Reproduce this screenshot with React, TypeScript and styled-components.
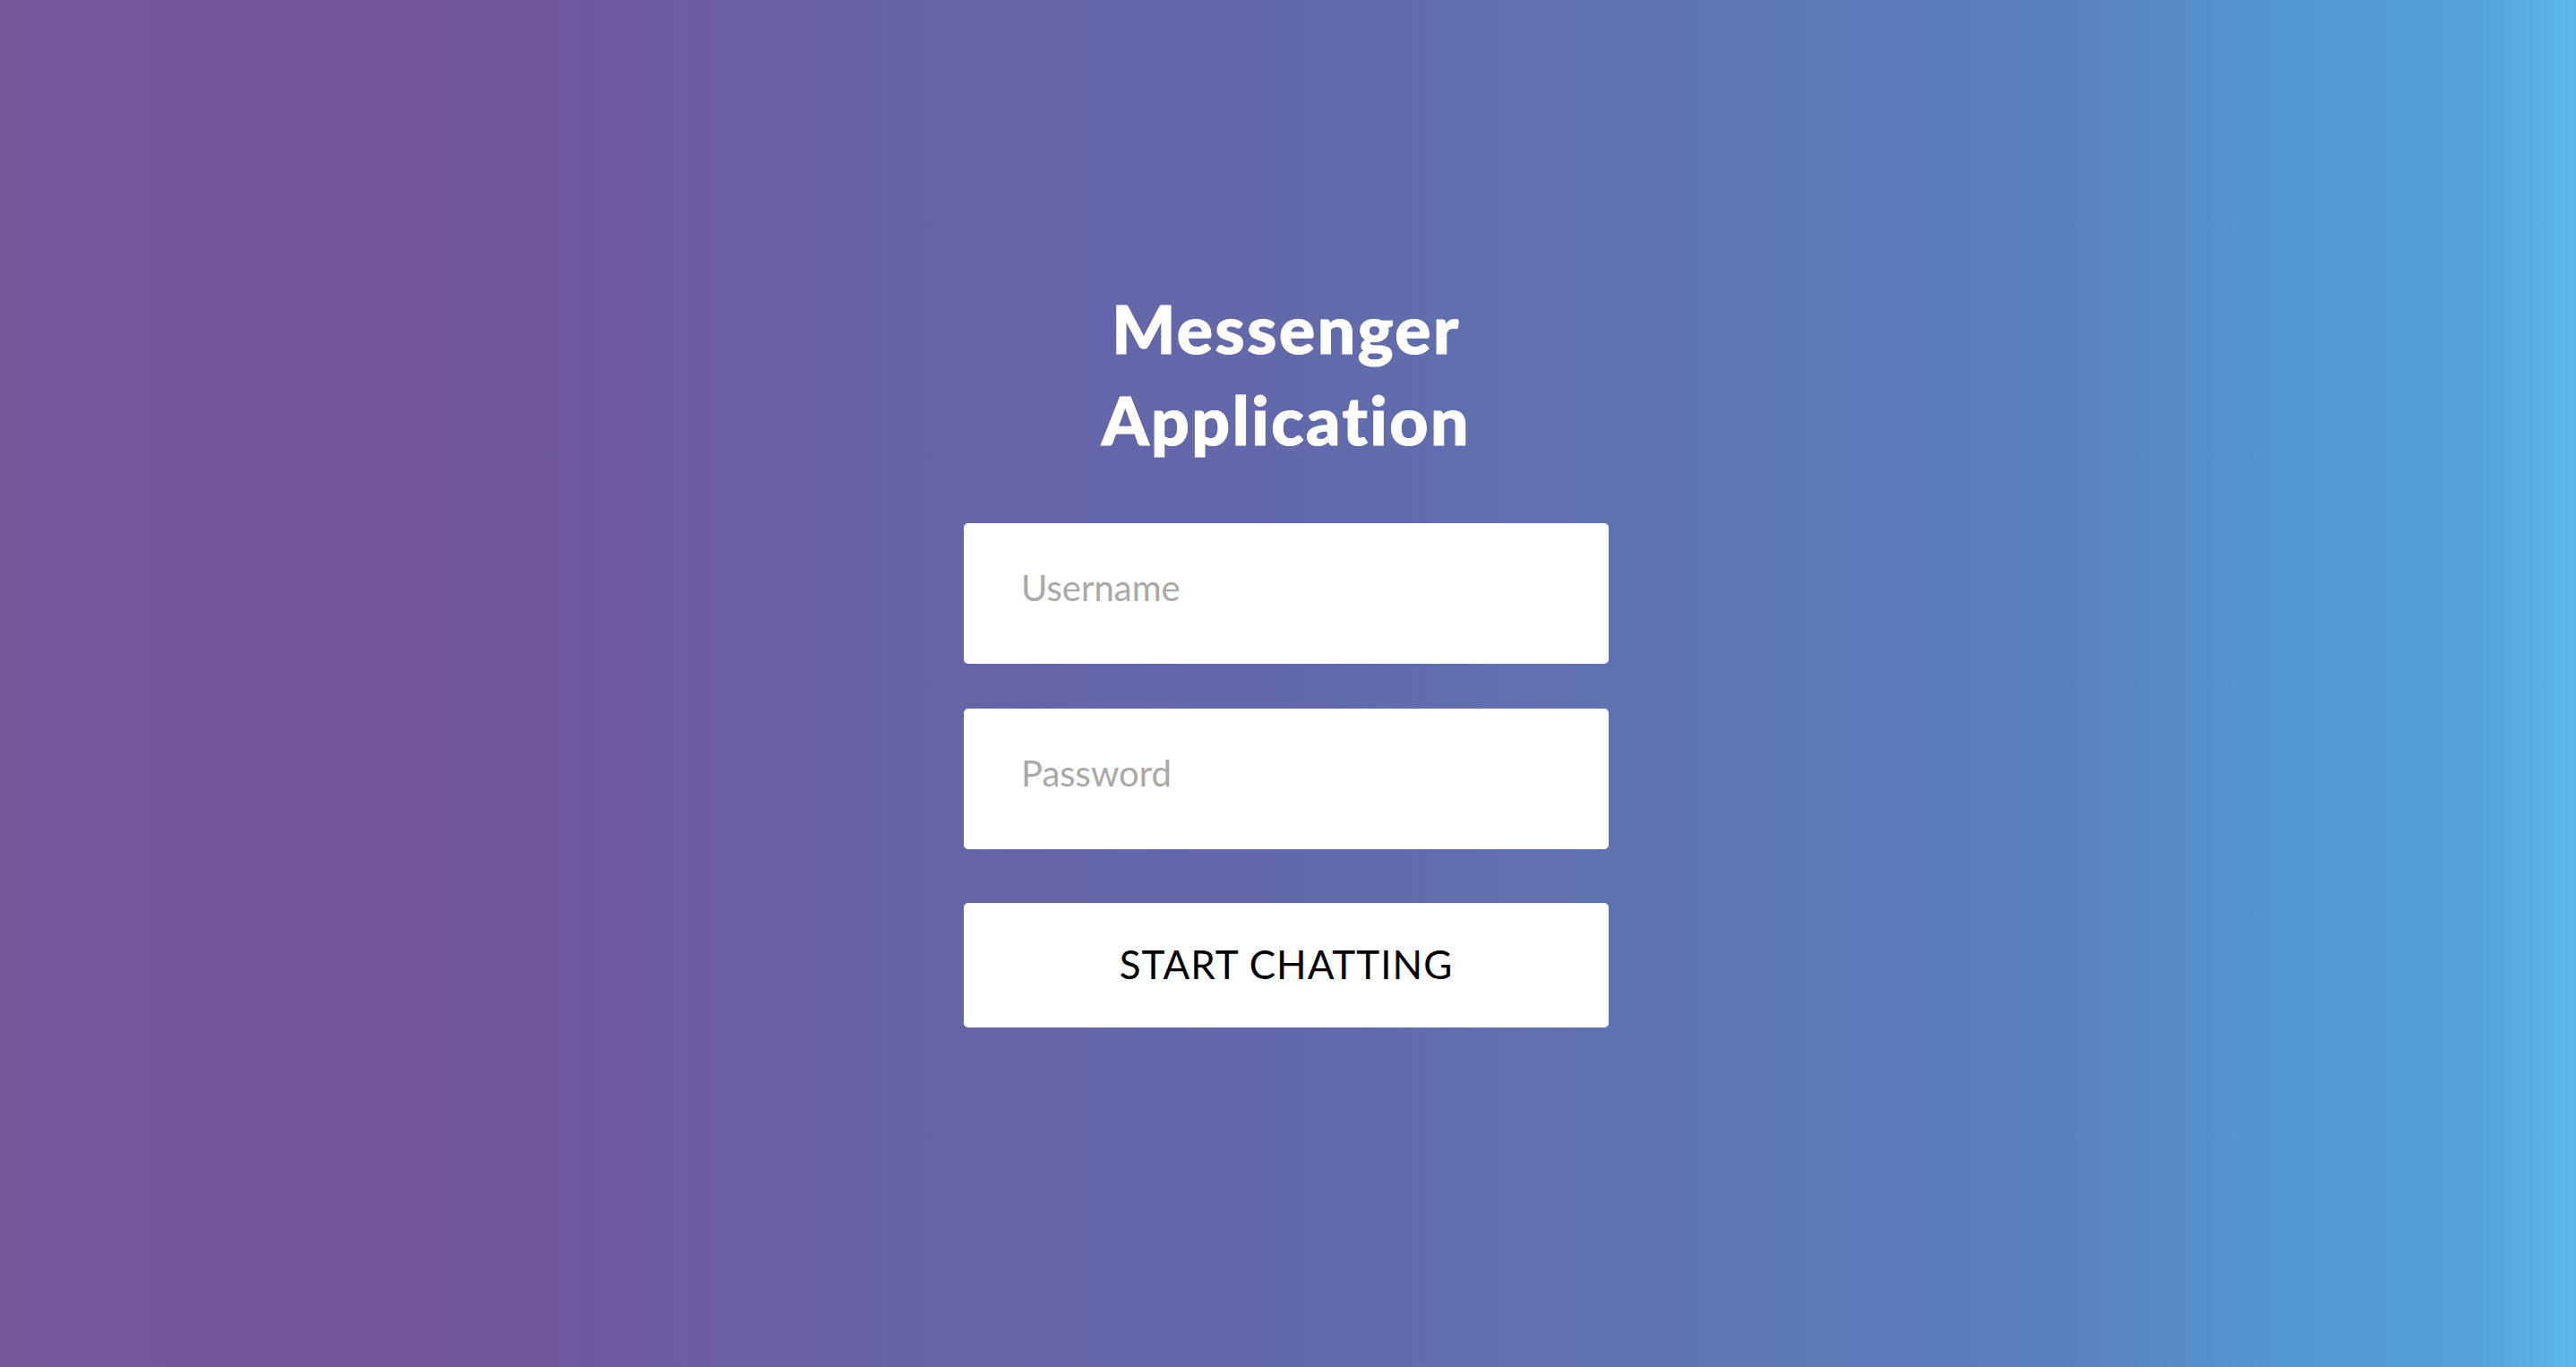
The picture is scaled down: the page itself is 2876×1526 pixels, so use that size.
import React from "react";
import styled, { createGlobalStyle } from "styled-components";

const GlobalStyle = createGlobalStyle`
  html, body {
    margin: 0;
    padding: 0;
  }
  body {
    font-family: Lato, "Noto Sans", sans-serif;
  }
  * { box-sizing: border-box; }
`;

const Page = styled.div`
  min-height: 1526px;
  width: 100%;
  background: linear-gradient(
    to right,
    #76579a 0%,
    #74569b 16%,
    #71589d 21%,
    #6563a6 35%,
    #6269aa 50%,
    #5a80be 80%,
    #5397cf 88.3%,
    #53a2d8 96%,
    #5bb8ea 100%
  );
  display: flex;
  flex-direction: column;
  align-items: center;
  padding-top: 315px;
  padding-right: 4px;
`;

const Title = styled.h1`
  margin: 0;
  font-family: Lato, sans-serif;
  font-weight: 900;
  font-size: 75px;
  line-height: 102px;
  color: #ffffff;
  text-align: center;
  letter-spacing: 2.5px;
  -webkit-text-stroke: 1.2px #ffffff;
`;

const Form = styled.form`
  display: flex;
  flex-direction: column;
  width: 720px;
  margin-top: 65px;
`;

const Field = styled.input`
  width: 100%;
  height: 157px;
  border: none;
  border-radius: 5px;
  background: #ffffff;
  padding: 0 0 14px 64px;
  font-family: Lato, sans-serif;
  font-size: 40px;
  font-weight: 400;
  color: #333;
  outline: none;
  & + & {
    margin-top: 50px;
  }
  &::placeholder {
    color: #a9a9a9;
  }
`;

const Button = styled.button`
  margin-top: 60px;
  width: 100%;
  height: 139px;
  border: none;
  border-radius: 5px;
  background: #ffffff;
  font-family: Lato, sans-serif;
  font-size: 44px;
  font-weight: 400;
  color: #000000;
  letter-spacing: 1px;
  cursor: pointer;
  padding: 0 0 4px;
`;

export default function App() {
  return (
    <>
      <GlobalStyle />
      <Page>
        <Title>
          Messenger
          <br />
          Application
        </Title>
        <Form onSubmit={(e) => e.preventDefault()}>
          <Field type="text" placeholder="Username" />
          <Field type="password" placeholder="Password" />
          <Button type="submit">START CHATTING</Button>
        </Form>
      </Page>
    </>
  );
}
